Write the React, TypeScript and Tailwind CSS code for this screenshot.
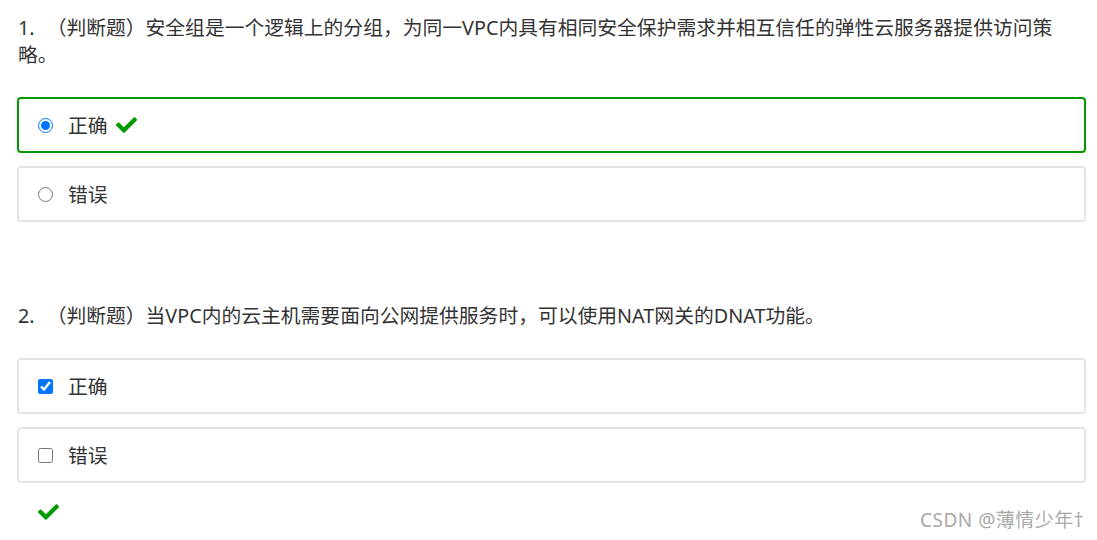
import React from "react";

const font = { fontFamily: '"Noto Sans", "Noto Sans CJK SC", sans-serif' };

function Check({ className }: { className?: string }) {
  return (
    <svg viewBox="0 64 512 384" className={className} fill="currentColor" aria-hidden="true">
      <path d="M173.898 439.404l-166.4-166.4c-9.997-9.997-9.997-26.206 0-36.204l36.203-36.204c9.997-9.998 26.207-9.998 36.204 0L192 312.69 432.095 72.596c9.997-9.997 26.207-9.997 36.204 0l36.203 36.204c9.997 9.997 9.997 26.206 0 36.204l-294.4 294.401c-9.998 9.997-26.207 9.997-36.204-.001z" />
    </svg>
  );
}

function Option({
  type,
  label,
  checked,
  correct,
  mark,
}: {
  type: "radio" | "checkbox";
  label: string;
  checked?: boolean;
  correct?: boolean;
  mark?: boolean;
}) {
  return (
    <label
      className={
        "flex h-[56px] items-center rounded-[4px] border-2 pl-[19px] " +
        (correct ? "border-[#009a00]" : "border-[#e5e5e5]")
      }
    >
      <input
        type={type}
        defaultChecked={checked}
        className="m-0 h-[15px] w-[15px] accent-[#0075ff]"
      />
      <span className="ml-[15px] text-[19.8px] leading-[27px] text-[#333]">{label}</span>
      {mark && <Check className="ml-[8px] h-[16px] w-[21px] text-[#009a00]" />}
    </label>
  );
}

function Question({ num, children }: { num: number; children: React.ReactNode }) {
  return (
    <p className="pl-[1px] text-[19.8px] leading-[27px] text-[#333]">
      <span className="mr-[12px]">{num}.</span>
      {children}
    </p>
  );
}

export default function App() {
  return (
    <div className="relative h-[540px] w-full overflow-hidden bg-white" style={font}>
      <div className="pl-[17px] pr-[11px] pt-[14px]">
        <Question num={1}>
          （判断题）安全组是一个逻辑上的分组，为同一VPC内具有相同安全保护需求并相互信任的弹性云服务器提供访问策
          <br />
          略。
        </Question>
        <div className="mt-[29px] flex flex-col gap-[13px]">
          <Option type="radio" label="正确" checked correct mark />
          <Option type="radio" label="错误" />
        </div>

        <div className="mt-[80px]">
          <Question num={2}>
            （判断题）当VPC内的云主机需要面向公网提供服务时，可以使用NAT网关的DNAT功能。
          </Question>
        </div>
        <div className="mt-[29px] flex flex-col gap-[13px]">
          <Option type="checkbox" label="正确" checked />
          <Option type="checkbox" label="错误" />
        </div>
        <div className="mt-[21px] pl-[21px]">
          <Check className="h-[16px] w-[21px] text-[#009a00]" />
        </div>
      </div>
      <div className="absolute bottom-[8px] right-[13px] text-[19px] leading-[24px] tracking-[0.5px] text-[#a8a8a8]">
        CSDN @薄情少年†
      </div>
    </div>
  );
}
